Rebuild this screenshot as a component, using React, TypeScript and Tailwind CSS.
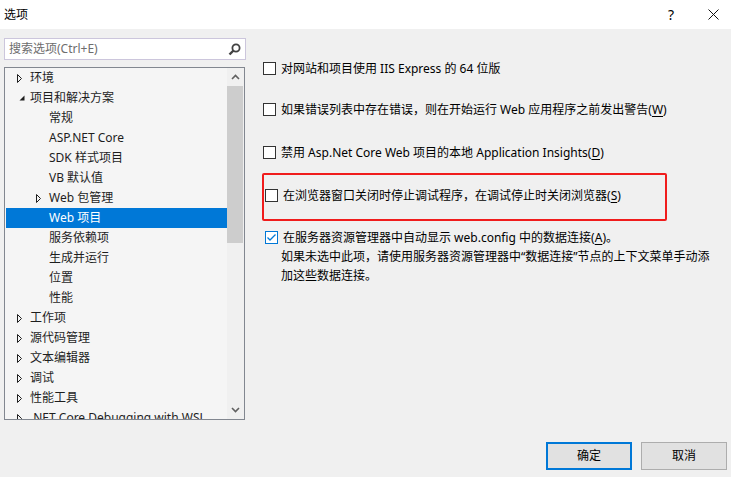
import type { ReactNode } from "react";

// ====== TREE DATA ======
type Node = { label: string; depth: 0 | 1; arrow?: "closed" | "open"; selected?: boolean };

const TREE: Node[] = [
  { label: "环境", depth: 0, arrow: "closed" },
  { label: "项目和解决方案", depth: 0, arrow: "open" },
  { label: "常规", depth: 1 },
  { label: "ASP.NET Core", depth: 1 },
  { label: "SDK 样式项目", depth: 1 },
  { label: "VB 默认值", depth: 1 },
  { label: "Web 包管理", depth: 1, arrow: "closed" },
  { label: "Web 项目", depth: 1, selected: true },
  { label: "服务依赖项", depth: 1 },
  { label: "生成并运行", depth: 1 },
  { label: "位置", depth: 1 },
  { label: "性能", depth: 1 },
  { label: "工作项", depth: 0, arrow: "closed" },
  { label: "源代码管理", depth: 0, arrow: "closed" },
  { label: "文本编辑器", depth: 0, arrow: "closed" },
  { label: "调试", depth: 0, arrow: "closed" },
  { label: "性能工具", depth: 0, arrow: "closed" },
  { label: ".NET Core Debugging with WSL", depth: 0, arrow: "closed" },
];

function Arrow({ kind, light }: { kind: "closed" | "open"; light?: boolean }) {
  if (kind === "open") {
    return (
      <svg width="8" height="8" viewBox="0 0 8 8" className="shrink-0 ml-[2px]">
        <path d="M6.5 1.5 L6.5 6.5 L1.5 6.5 Z" fill="#1e1e1e" />
      </svg>
    );
  }
  return (
    <svg width="8" height="9" viewBox="0 0 8 9" className="shrink-0">
      <path d="M1.5 0.5 L5.5 4.5 L1.5 8.5 Z" fill="none" stroke={light ? "#fff" : "#1e1e1e"} strokeWidth="1" />
    </svg>
  );
}

function TreeRow({ node }: { node: Node }) {
  const pad = node.depth === 0 ? "pl-[10px]" : "pl-[29px]";
  return (
    <div
      className={`flex h-[20px] items-center ml-px ${pad} ${
        node.selected ? "bg-[#0078d7] text-white" : "text-[#1e1e1e]"
      }`}
    >
      <div className="w-[14px] flex items-center">
        {node.arrow && <Arrow kind={node.arrow} light={node.selected} />}
      </div>
      <span className="whitespace-nowrap">{node.label}</span>
    </div>
  );
}

function Box({ checked }: { checked?: boolean }) {
  return (
    <div
      className={`w-[13px] h-[13px] shrink-0 border bg-white flex items-center justify-center ${
        checked ? "border-[#0078d7]" : "border-[#333333]"
      }`}
    >
      {checked && (
        <svg width="11" height="11" viewBox="0 0 11 11">
          <path d="M1.5 5.5 L4 8 L9.5 2.5" fill="none" stroke="#0078d7" strokeWidth="1.3" />
        </svg>
      )}
    </div>
  );
}

function Check({ checked, children }: { checked?: boolean; children: ReactNode }) {
  return (
    <div className="flex items-center h-[19px] gap-[5px]">
      <Box checked={checked} />
      <span className="whitespace-nowrap">{children}</span>
    </div>
  );
}

function Key({ k }: { k: string }) {
  return (
    <>
      (<span className="underline underline-offset-2">{k}</span>)
    </>
  );
}

export default function App() {
  return (
    <div className="w-[731px] h-[477px] bg-[#f0f0f0] flex flex-col text-[12px] text-black font-['Noto_Sans','Noto_Sans_CJK_SC',sans-serif] overflow-hidden">
      {/* title bar */}
      <div className="h-[29px] bg-white flex items-center shrink-0">
        <span className="pl-[4px] flex-1">选项</span>
        <span className="text-[14px] mr-[34px]">?</span>
        <svg width="11" height="11" viewBox="0 0 11 11" className="mr-[12px]">
          <path d="M0.5 0.5 L10.5 10.5 M10.5 0.5 L0.5 10.5" stroke="#111" strokeWidth="1" />
        </svg>
      </div>

      <div className="flex flex-1 min-h-0">
        {/* left */}
        <div className="w-[250px] shrink-0 pl-[4px]">
          <div className="mt-[9px] h-[22px] w-[242px] bg-white border border-[#ccc6dc] flex items-center pl-[4px] pr-[4px]">
            <span className="flex-1 text-[#6d6d6d]">搜索选项(Ctrl+E)</span>
            <svg width="13" height="13" viewBox="0 0 13 13">
              <circle cx="8" cy="5" r="3.6" fill="none" stroke="#424242" strokeWidth="1.8" />
              <path d="M5.5 7.5 L1.5 11.5" stroke="#424242" strokeWidth="2.4" />
            </svg>
          </div>

          <div className="mt-[7px] h-[353px] w-[241px] border border-[#828790] bg-[#f5f5f5] flex overflow-hidden">
            <div className="flex-1 min-w-0 overflow-hidden">
              {TREE.map((n) => (
                <TreeRow key={n.label} node={n} />
              ))}
            </div>
            {/* scrollbar */}
            <div className="w-[17px] bg-[#f0f0f0] flex flex-col items-center">
              <div className="h-[18px] flex items-center justify-center">
                <svg width="9" height="6" viewBox="0 0 9 6">
                  <path d="M1 5 L4.5 1.5 L8 5" fill="none" stroke="#606060" strokeWidth="1.6" />
                </svg>
              </div>
              <div className="h-[157px] w-[16px] bg-[#cdcdcd] self-start" />
              <div className="flex-1" />
              <div className="h-[18px] flex items-center justify-center">
                <svg width="9" height="6" viewBox="0 0 9 6">
                  <path d="M1 1 L4.5 4.5 L8 1" fill="none" stroke="#606060" strokeWidth="1.6" />
                </svg>
              </div>
            </div>
          </div>
        </div>

        {/* right */}
        <div className="flex-1 flex flex-col pl-[13px] relative">
          <div className="mt-[30px] flex flex-col">
            <Check>对网站和项目使用 IIS Express 的 64 位版</Check>
            <div className="h-[22px]" />
            <Check>
              如果错误列表中存在错误，则在开始运行 Web 应用程序之前发出警告<Key k="W" />
            </Check>
            <div className="h-[24px]" />
            <Check>
              禁用 Asp.Net Core Web 项目的本地 Application Insights<Key k="D" />
            </Check>
            <div className="h-[24px]" />
            <div className="pl-[2px]">
              <Check>
                在浏览器窗口关闭时停止调试程序，在调试停止时关闭浏览器<Key k="S" />
              </Check>
            </div>
            <div className="h-[23px]" />
            <div className="pl-[2px]">
              <Check checked>
                在服务器资源管理器中自动显示 web.config 中的数据连接<Key k="A" />。
              </Check>
              <div className="pl-[16px] leading-[19px] text-black whitespace-nowrap">
                如果未选中此项，请使用服务器资源管理器中“数据连接”节点的上下文菜单手动添
                <br />
                加这些数据连接。
              </div>
            </div>
          </div>

          {/* red annotation */}
          <div className="absolute left-[12px] top-[144px] w-[405px] h-[48px] border-2 border-[#f01c1c] rounded-[2px] pointer-events-none" />

          <div className="flex-1" />
          <div className="flex justify-end gap-[9px] pr-[4px] mb-[7px]">
            <button className="w-[86px] h-[28px] bg-[#e1e1e1] border-2 border-[#0078d7] text-black">确定</button>
            <button className="w-[86px] h-[28px] bg-[#e1e1e1] border border-[#adadad] text-black">取消</button>
          </div>
        </div>
      </div>
    </div>
  );
}
